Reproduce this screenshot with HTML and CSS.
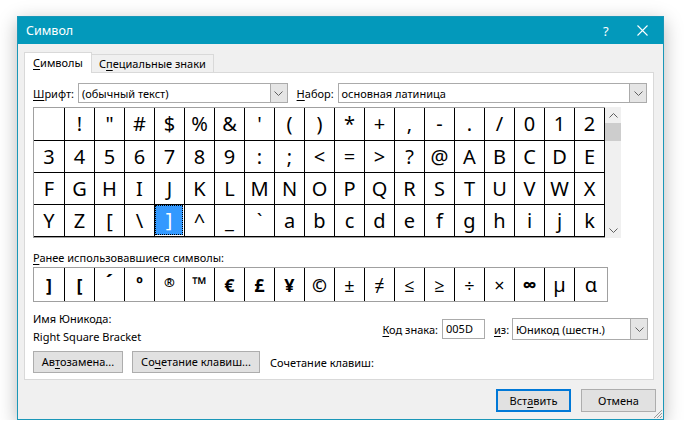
FILE: index.html
```html
<!DOCTYPE html>
<html lang="ru">
<head>
<meta charset="utf-8">
<title>Символ</title>
<link rel="stylesheet" href="styles.css">
</head>
<body>
<div class="window">
  <div class="titlebar">
    <span class="title">Символ</span>
    <span class="help">?</span>
    <span class="close"><svg width="11" height="11" viewBox="0 0 11 11"><path d="M0.5 0.5L10.5 10.5M10.5 0.5L0.5 10.5" stroke="#fff" stroke-width="1.1" fill="none"/></svg></span>
  </div>
  <div class="content">
    <div class="tabs">
      <div class="tab active"><u>С</u>имволы</div>
      <div class="tab">С<u>п</u>ециальные знаки</div>
    </div>
    <div class="panel">
      <div class="fontrow">
        <span class="lbl lbl-font"><u>Ш</u>рифт:</span>
        <div class="combo combo-font"><span class="combo-text">(обычный текст)</span><span class="dd"><svg width="9" height="5" viewBox="0 0 9 5"><path d="M0.5 0.5L4.5 4.5L8.5 0.5" stroke="#606060" fill="none"/></svg></span></div>
        <span class="lbl lbl-set"><u>Н</u>абор:</span>
        <div class="combo combo-set"><span class="combo-text">основная латиница</span><span class="dd"><svg width="9" height="5" viewBox="0 0 9 5"><path d="M0.5 0.5L4.5 4.5L8.5 0.5" stroke="#606060" fill="none"/></svg></span></div>
      </div>
      <div class="gridwrap">
        <div class="grid">
          <div class="c"> </div><div class="c">!</div><div class="c">"</div><div class="c">#</div><div class="c">$</div><div class="c">%</div><div class="c">&amp;</div><div class="c">'</div><div class="c">(</div><div class="c">)</div><div class="c">*</div><div class="c">+</div><div class="c">,</div><div class="c">-</div><div class="c">.</div><div class="c">/</div><div class="c">0</div><div class="c">1</div><div class="c">2</div>
          <div class="c">3</div><div class="c">4</div><div class="c">5</div><div class="c">6</div><div class="c">7</div><div class="c">8</div><div class="c">9</div><div class="c">:</div><div class="c">;</div><div class="c">&lt;</div><div class="c">=</div><div class="c">&gt;</div><div class="c">?</div><div class="c">@</div><div class="c">A</div><div class="c">B</div><div class="c">C</div><div class="c">D</div><div class="c">E</div>
          <div class="c">F</div><div class="c">G</div><div class="c">H</div><div class="c">I</div><div class="c">J</div><div class="c">K</div><div class="c">L</div><div class="c">M</div><div class="c">N</div><div class="c">O</div><div class="c">P</div><div class="c">Q</div><div class="c">R</div><div class="c">S</div><div class="c">T</div><div class="c">U</div><div class="c">V</div><div class="c">W</div><div class="c">X</div>
          <div class="c">Y</div><div class="c">Z</div><div class="c">[</div><div class="c">\</div><div class="c sel"><span>]</span></div><div class="c">^</div><div class="c">_</div><div class="c">`</div><div class="c">a</div><div class="c">b</div><div class="c">c</div><div class="c">d</div><div class="c">e</div><div class="c">f</div><div class="c">g</div><div class="c">h</div><div class="c">i</div><div class="c">j</div><div class="c">k</div>
        </div>
        <div class="scrollbar">
          <span class="arrow"><svg width="9" height="5" viewBox="0 0 9 5"><path d="M0.5 4.5L4.5 0.5L8.5 4.5" stroke="#606060" fill="none"/></svg></span>
          <span class="thumb"></span>
          <span class="track"></span>
          <span class="arrow"><svg width="9" height="5" viewBox="0 0 9 5"><path d="M0.5 0.5L4.5 4.5L8.5 0.5" stroke="#606060" fill="none"/></svg></span>
        </div>
      </div>
      <div class="recent-label"><u>Р</u>анее использовавшиеся символы:</div>
      <div class="recent">
        <div class="r b">]</div><div class="r b">[</div><div class="r b acc">´</div><div class="r b ordo">º</div><div class="r b reg">®</div><div class="r b tm">™</div><div class="r b">€</div><div class="r b">£</div><div class="r b">¥</div><div class="r b">©</div><div class="r">±</div><div class="r">≠</div><div class="r">≤</div><div class="r">≥</div><div class="r">÷</div><div class="r">×</div><div class="r b inf">∞</div><div class="r big">µ</div><div class="r big">α</div>
      </div>
      <div class="info">
        <div class="names">
          <div class="line">Имя Юникода:</div>
          <div class="line">Right Square Bracket</div>
        </div>
        <div class="code">
          <span class="lbl"><u>К</u>од знака:</span>
          <div class="input">005D</div>
          <span class="lbl lbl-from"><u>и</u>з:</span>
          <div class="combo combo-from"><span class="combo-text">Юникод (шестн.)</span><span class="dd"><svg width="9" height="5" viewBox="0 0 9 5"><path d="M0.5 0.5L4.5 4.5L8.5 0.5" stroke="#606060" fill="none"/></svg></span></div>
        </div>
      </div>
      <div class="btnrow">
        <div class="btn btn-auto">Ав<u>т</u>озамена...</div>
        <div class="btn btn-keys">Со<u>ч</u>етание клавиш...</div>
        <span class="keys-label">Сочетание клавиш:</span>
      </div>
    </div>
    <div class="footer">
      <div class="btn btn-ok">Вст<u>а</u>вить</div>
      <div class="btn btn-cancel">Отмена</div>
    </div>
  </div>
  <svg class="grip" width="10" height="10" viewBox="0 0 10 10"><path d="M9 1L1 9M9 4L4 9M9 7L7 9" stroke="#9a9a9a" stroke-width="1" fill="none"/></svg>
</div>
</body>
</html>
```

FILE: styles.css
```css
* { box-sizing: border-box; }
html, body { margin: 0; padding: 0; background: #ffffff; }
body {
  font-family: "Noto Sans", "Open Sans", sans-serif;
  font-size: 11px;
  color: #000;
  padding: 16px 0 0 17px;
}
u { text-decoration: underline; text-underline-offset: 2px; }

.window {
  position: relative;
  width: 647px;
  height: 404px;
  border: 1px solid #1a97b8;
  background: #f0f0f0;
  box-shadow: 0 5px 18px rgba(0, 0, 0, 0.28);
  display: flex;
  flex-direction: column;
}

.titlebar {
  height: 27px;
  flex: none;
  background: #0399bb;
  color: #fff;
  display: flex;
  align-items: center;
  padding-left: 8px;
}
.title { flex: 1; font-size: 12.5px; }
.help { font-size: 13px; width: 34px; }
.close { width: 26px; display: flex; align-items: center; }

.content {
  flex: 1;
  padding: 8px 9px 0 6px;
  display: flex;
  flex-direction: column;
}

.tabs { display: flex; height: 20px; align-items: flex-end; }
.tab {
  height: 18px;
  line-height: 17px;
  border: 1px solid #d9d9d9;
  border-left: none;
  border-bottom: none;
  background: #f0f0f0;
  padding-left: 7px;
  width: 122px;
  white-space: nowrap;
}
.tab.active {
  height: 21px;
  line-height: 20px;
  width: 68px;
  border-left: 1px solid #d9d9d9;
  background: #fff;
  padding-left: 8px;
  margin-bottom: -1px;
  position: relative;
  z-index: 1;
}

.panel {
  height: 308px;
  background: #fff;
  border: 1px solid #d9d9d9;
  padding: 10px 6px 0 8px;
}

.fontrow { display: flex; align-items: center; height: 20px; }
.lbl { white-space: nowrap; }
.lbl-font { width: 45px; }
.lbl-set { margin-left: 9px; width: 41px; }

.combo {
  height: 20px;
  border: 1px solid #ababab;
  display: flex;
  align-items: center;
  background: #fff;
}
.combo-text { flex: 1; padding-left: 3px; white-space: nowrap; overflow: hidden; }
.dd {
  width: 18px;
  height: 20px;
  margin: -1px -1px -1px 0;
  border: 1px solid #ababab;
  background: #e5e5e5;
  display: flex;
  align-items: center;
  justify-content: center;
}
.combo-font { width: 210px; }
.combo-set { width: 310px; }

.gridwrap { display: flex; margin-top: 4px; }
.grid {
  display: grid;
  grid-template-columns: 31px repeat(18, 30px);
  grid-template-rows: 33px repeat(3, 32px);
  border-top: 1px solid #a0a0a0;
  border-left: 1px solid #a0a0a0;
  border-bottom: 1px solid #a0a0a0;
  font-size: 20px;
}
.c {
  border-right: 1px solid #000;
  border-bottom: 1px solid #000;
  display: flex;
  align-items: center;
  justify-content: center;
  line-height: 1;
}
.c.sel { padding: 0 1px 1px 0; }
.c.sel span {
  width: 100%;
  height: 100%;
  background: #3399ff;
  color: #fff;
  outline: 1px dotted #000;
  outline-offset: -1px;
  display: flex;
  align-items: center;
  justify-content: center;
}

.scrollbar {
  width: 16px;
  height: 131px;
  background: #f0f0f0;
  display: flex;
  flex-direction: column;
}
.arrow { height: 16px; display: flex; align-items: center; justify-content: center; }
.thumb { height: 18px; background: #cdcdcd; flex: none; }
.track { flex: 1; }

.recent-label { margin-top: 12px; height: 16px; line-height: 16px; }
.recent {
  margin-top: 1px;
  width: 575px;
  height: 35px;
  border: 1px solid #a0a0a0;
  display: grid;
  grid-template-columns: 31px repeat(17, 30px) 1fr;
  font-size: 18px;
}
.r {
  border-right: 1px solid #000;
  display: flex;
  align-items: center;
  justify-content: center;
  line-height: 1;
}
.r:last-child { border-right: none; }
.r.big { font-size: 20px; }
.r.b { font-weight: bold; }
.r.ordo { font-size: 17px; padding-bottom: 3px; }
.r.reg { font-size: 13px; padding-bottom: 4px; }
.r.tm { font-size: 19px; padding-bottom: 1px; }
.r.acc { padding-bottom: 6px; font-size: 20px; }
.r.inf { font-size: 20px; }

.info { display: flex; margin-top: 9px; height: 35px; }
.names { display: flex; flex-direction: column; gap: 2px; }
.line { height: 16px; line-height: 16px; }
.code { margin-left: auto; margin-right: -1px; margin-top: 7px; display: flex; align-items: center; height: 22px; }
.input {
  width: 43px;
  height: 20px;
  border: 1px solid #ababab;
  background: #fff;
  padding-left: 3px;
  line-height: 18px;
  margin-left: 4px;
}
.lbl-from { margin-left: 9px; width: 18px; }
.combo-from { width: 136px; height: 22px; }
.combo-from .dd { height: 22px; }

.btnrow { display: flex; align-items: center; margin-top: 5px; height: 22px; }
.btn {
  height: 22px;
  line-height: 20px;
  border: 1px solid #adadad;
  background: #e1e1e1;
  text-align: center;
  white-space: nowrap;
}
.btn-auto { width: 90px; }
.btn-keys { width: 128px; margin-left: 9px; }
.keys-label { margin-left: 10px; }

.footer {
  display: flex;
  justify-content: flex-end;
  margin-top: 9px;
  margin-right: -2px;
  gap: 10px;
}
.btn-ok { width: 75px; height: 23px; line-height: 19px; border: 2px solid #0078d7; }
.btn-cancel { width: 75px; height: 23px; line-height: 21px; }

.grip { position: absolute; right: 0; bottom: 0; }
```
